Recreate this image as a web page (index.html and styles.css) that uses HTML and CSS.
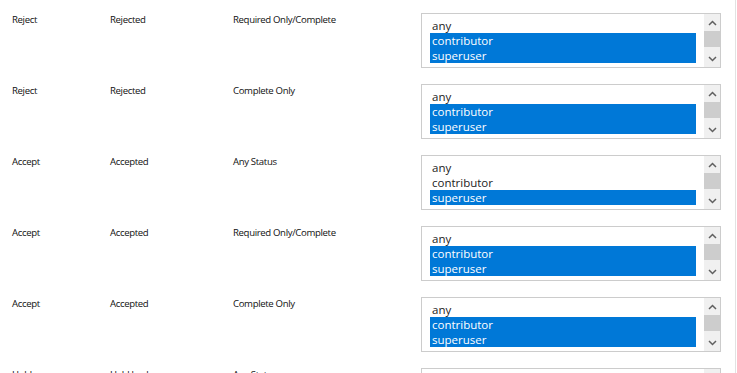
FILE: index.html
```html
<!DOCTYPE html>
<html>
<head>
<meta charset="utf-8">
<link rel="stylesheet" href="styles.css">
</head>
<body>
<div class="page">
  <div class="table">
    <div class="row">
      <div class="cell">Reject</div>
      <div class="cell">Rejected</div>
      <div class="cell">Required Only/Complete</div>
      <div class="listbox">
        <div class="options">
          <div class="opt">any</div>
          <div class="opt sel">contributor</div>
          <div class="opt sel">superuser</div>
        </div>
        <div class="sb">
          <div class="btn"><svg width="9" height="6" viewBox="0 0 9 6"><polyline points="1,5 4.5,1.5 8,5" /></svg></div>
          <div class="track"><div class="thumb"></div></div>
          <div class="btn"><svg width="9" height="6" viewBox="0 0 9 6"><polyline points="1,1 4.5,4.5 8,1" /></svg></div>
        </div>
      </div>
    </div>
    <div class="row">
      <div class="cell">Reject</div>
      <div class="cell">Rejected</div>
      <div class="cell">Complete Only</div>
      <div class="listbox">
        <div class="options">
          <div class="opt">any</div>
          <div class="opt sel">contributor</div>
          <div class="opt sel">superuser</div>
        </div>
        <div class="sb">
          <div class="btn"><svg width="9" height="6" viewBox="0 0 9 6"><polyline points="1,5 4.5,1.5 8,5" /></svg></div>
          <div class="track"><div class="thumb"></div></div>
          <div class="btn"><svg width="9" height="6" viewBox="0 0 9 6"><polyline points="1,1 4.5,4.5 8,1" /></svg></div>
        </div>
      </div>
    </div>
    <div class="row">
      <div class="cell">Accept</div>
      <div class="cell">Accepted</div>
      <div class="cell">Any Status</div>
      <div class="listbox">
        <div class="options">
          <div class="opt">any</div>
          <div class="opt">contributor</div>
          <div class="opt sel">superuser</div>
        </div>
        <div class="sb">
          <div class="btn"><svg width="9" height="6" viewBox="0 0 9 6"><polyline points="1,5 4.5,1.5 8,5" /></svg></div>
          <div class="track"><div class="thumb"></div></div>
          <div class="btn"><svg width="9" height="6" viewBox="0 0 9 6"><polyline points="1,1 4.5,4.5 8,1" /></svg></div>
        </div>
      </div>
    </div>
    <div class="row">
      <div class="cell">Accept</div>
      <div class="cell">Accepted</div>
      <div class="cell">Required Only/Complete</div>
      <div class="listbox">
        <div class="options">
          <div class="opt">any</div>
          <div class="opt sel">contributor</div>
          <div class="opt sel">superuser</div>
        </div>
        <div class="sb">
          <div class="btn"><svg width="9" height="6" viewBox="0 0 9 6"><polyline points="1,5 4.5,1.5 8,5" /></svg></div>
          <div class="track"><div class="thumb"></div></div>
          <div class="btn"><svg width="9" height="6" viewBox="0 0 9 6"><polyline points="1,1 4.5,4.5 8,1" /></svg></div>
        </div>
      </div>
    </div>
    <div class="row">
      <div class="cell">Accept</div>
      <div class="cell">Accepted</div>
      <div class="cell">Complete Only</div>
      <div class="listbox">
        <div class="options">
          <div class="opt">any</div>
          <div class="opt sel">contributor</div>
          <div class="opt sel">superuser</div>
        </div>
        <div class="sb">
          <div class="btn"><svg width="9" height="6" viewBox="0 0 9 6"><polyline points="1,5 4.5,1.5 8,5" /></svg></div>
          <div class="track"><div class="thumb"></div></div>
          <div class="btn"><svg width="9" height="6" viewBox="0 0 9 6"><polyline points="1,1 4.5,4.5 8,1" /></svg></div>
        </div>
      </div>
    </div>
    <div class="row">
      <div class="cell">Hold</div>
      <div class="cell">Held back</div>
      <div class="cell">Any Status</div>
      <div class="listbox">
        <div class="options">
          <div class="opt">any</div>
          <div class="opt sel">contributor</div>
          <div class="opt sel">superuser</div>
        </div>
        <div class="sb">
          <div class="btn"><svg width="9" height="6" viewBox="0 0 9 6"><polyline points="1,5 4.5,1.5 8,5" /></svg></div>
          <div class="track"><div class="thumb"></div></div>
          <div class="btn"><svg width="9" height="6" viewBox="0 0 9 6"><polyline points="1,1 4.5,4.5 8,1" /></svg></div>
        </div>
      </div>
    </div>
  </div>
</div>
</body>
</html>
```
FILE: styles.css
```css
html, body {
  margin: 0;
  padding: 0;
  background: #fff;
  overflow: hidden;
}
.page {
  width: 735px;
  height: 373px;
  border-right: 1px solid #e2e2e2;
  overflow: hidden;
  font-family: "Open Sans", "Noto Sans", sans-serif;
}
.table {
  padding-left: 12px;
}
.row {
  display: grid;
  grid-template-columns: 98px 123px 188px 300px;
  align-items: start;
  height: 71px;
  box-sizing: border-box;
  padding-top: 13px;
}
.cell {
  font-size: 9.6px;
  line-height: 14px;
  color: #111;
  letter-spacing: -0.35px;
}
.listbox {
  display: flex;
  height: 55px;
  box-sizing: border-box;
  border: 1px solid #cccccc;
  background: #fff;
}
.options {
  flex: 1;
  padding: 4px 8px;
  overflow: hidden;
}
.opt {
  height: 15px;
  line-height: 15px;
  font-size: 11.5px;
  color: #222;
  padding-left: 2px;
  white-space: nowrap;
}
.opt.sel {
  background: #0078d7;
  color: #fff;
}
.sb {
  width: 16px;
  background: #f0f0f0;
  display: flex;
  flex-direction: column;
}
.btn {
  height: 17px;
  display: flex;
  align-items: center;
  justify-content: center;
}
.btn svg polyline {
  fill: none;
  stroke: #606060;
  stroke-width: 1.5;
}
.track {
  flex: 1;
}
.thumb {
  height: 16px;
  background: #cdcdcd;
}
```
